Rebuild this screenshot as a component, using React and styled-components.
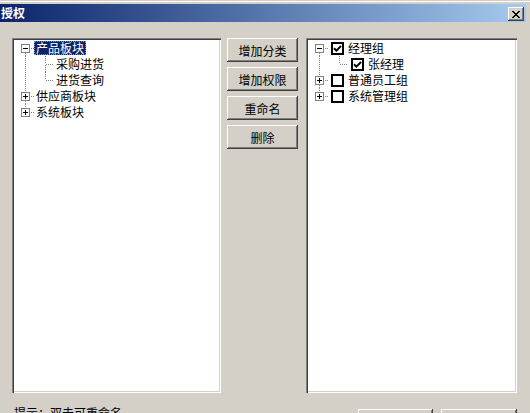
import React from "react";
import styled, { createGlobalStyle } from "styled-components";

const GlobalStyle = createGlobalStyle`
  html, body {
    margin: 0;
    padding: 0;
    background: #d4d0c8;
    overflow: hidden;
  }
  body {
    font-family: "Noto Sans CJK SC", "Liberation Sans", sans-serif;
    font-size: 12px;
    color: #000;
  }
`;

const leftTree = [
  {
    label: "产品板块",
    open: true,
    selected: true,
    children: [{ label: "采购进货" }, { label: "进货查询" }]
  },
  { label: "供应商板块", children: [{ label: "-" }] },
  { label: "系统板块", children: [{ label: "-" }] }
];

const rightTree = [
  {
    label: "经理组",
    open: true,
    checked: true,
    children: [{ label: "张经理", checked: true }]
  },
  { label: "普通员工组", children: [{ label: "-" }] },
  { label: "系统管理组", children: [{ label: "-" }] }
];

const flatten = (nodes, level = 0, guides = []) =>
  nodes.flatMap((node, i) => {
    const last = i === nodes.length - 1;
    const row = {
      ...node,
      level,
      guides,
      first: level === 0 && i === 0,
      last,
      hasChildren: !!node.children
    };
    const kids =
      node.open && node.children
        ? flatten(node.children, level + 1, [...guides, !last])
        : [];
    return [row, ...kids];
  });

const Guide = ({ on }) => (
  <svg width="20" height="16" viewBox="0 0 20 16">
    {on && (
      <line
        x1="11.5"
        y1="0"
        x2="11.5"
        y2="16"
        stroke="#808080"
        strokeDasharray="1 1"
        shapeRendering="crispEdges"
      />
    )}
  </svg>
);

const Connector = ({ top, bottom, box, open }) => (
  <svg width="20" height="16" viewBox="0 0 20 16">
    <g stroke="#808080" strokeDasharray="1 1" shapeRendering="crispEdges">
      {top && <line x1="11.5" y1="0" x2="11.5" y2={box ? 4 : 8} />}
      {bottom && <line x1="11.5" y1={box ? 13 : 9} x2="11.5" y2="16" />}
      <line x1={box ? 17 : 12} y1="8.5" x2="20" y2="8.5" />
    </g>
    {box && (
      <g shapeRendering="crispEdges">
        <rect x="7.5" y="4.5" width="8" height="8" fill="#fff" stroke="#808080" />
        <line x1="9" y1="8.5" x2="14" y2="8.5" stroke="#000" />
        {!open && <line x1="11.5" y1="6" x2="11.5" y2="11" stroke="#000" />}
      </g>
    )}
  </svg>
);

const CheckBox = ({ checked }) => (
  <Check width="13" height="13" viewBox="0 0 13 13">
    <rect x="1" y="1" width="11" height="11" fill="#fff" stroke="#000" strokeWidth="2" />
    {checked && (
      <path d="M3 6.2 L5.4 8.6 L10 4" fill="none" stroke="#000" strokeWidth="2" />
    )}
  </Check>
);

const Tree = ({ nodes, checks }) => (
  <TreeList>
    {flatten(nodes).map((row, i) => (
      <Row key={i}>
        {row.guides.map((g, j) => (
          <Guide key={j} on={g} />
        ))}
        <Connector
          top={!row.first}
          bottom={!row.last}
          box={row.hasChildren}
          open={row.open}
        />
        {checks && <CheckBox checked={row.checked} />}
        <Label $selected={row.selected}>{row.label}</Label>
      </Row>
    ))}
  </TreeList>
);

const CloseGlyph = () => (
  <svg width="8" height="7" viewBox="0 0 8 7" shapeRendering="crispEdges">
    <path
      fill="#000"
      d="M0 0h2v1H0zM6 0h2v1H6zM1 1h2v1H1zM5 1h2v1H5zM2 2h4v1H2zM3 3h2v1H3zM2 4h4v1H2zM1 5h2v1H1zM5 5h2v1H5zM0 6h2v1H0zM6 6h2v1H6z"
    />
  </svg>
);

export default function App() {
  return (
    <>
      <GlobalStyle />
      <Window>
        <TitleBar>
          <Title>授权</Title>
          <CloseButton>
            <CloseGlyph />
          </CloseButton>
        </TitleBar>
        <Body>
          <Main>
            <Panel $width={209}>
              <Tree nodes={leftTree} />
            </Panel>
            <ButtonColumn>
              <Button>增加分类</Button>
              <Button>增加权限</Button>
              <Button>重命名</Button>
              <Button>删除</Button>
            </ButtonColumn>
            <Panel $width={211}>
              <Tree nodes={rightTree} checks />
            </Panel>
          </Main>
          <Footer>
            <Hint>提示：双击可重命名</Hint>
            <FooterButtons>
              <Button $width={75}>确定</Button>
              <Button $width={76}>取消</Button>
            </FooterButtons>
          </Footer>
        </Body>
      </Window>
    </>
  );
}

const Window = styled.div`
  height: 413px;
  box-sizing: border-box;
  overflow: hidden;
  border-top: 1px solid #d4d0c8;
  box-shadow: inset 0 1px #fff;
  padding-top: 3px;
`;

const TitleBar = styled.div`
  display: flex;
  justify-content: space-between;
  align-items: flex-start;
  width: 526px;
  height: 18px;
  box-sizing: border-box;
  padding: 0 2px 0 1px;
  background: linear-gradient(to right, #0a246a, #a6caf0);
`;

const Title = styled.span`
  color: #fff;
  font-weight: bold;
  font-size: 12px;
  line-height: 18px;
`;

const CloseButton = styled.div`
  display: flex;
  align-items: center;
  justify-content: center;
  width: 16px;
  height: 14px;
  margin-top: 3px;
  background: #d4d0c8;
  box-shadow: inset -1px -1px #404040, inset 1px 1px #fff,
    inset -2px -2px #808080;
`;

const Body = styled.div`
  padding: 16px 0 0 12px;
`;

const Main = styled.div`
  display: flex;
  height: 355px;
`;

const Panel = styled.div`
  width: ${p => p.$width}px;
  height: 100%;
  box-sizing: border-box;
  padding: 2px;
  background: #fff;
  box-shadow: inset 1px 1px #808080, inset 2px 2px #404040,
    inset -1px -1px #fff, inset -2px -2px #d4d0c8;
`;

const ButtonColumn = styled.div`
  display: flex;
  flex-direction: column;
  gap: 5px;
  margin: 0 8px 0 6px;
`;

const Button = styled.button`
  width: ${p => p.$width || 71}px;
  height: 24px;
  padding: 0;
  border: none;
  background: #d4d0c8;
  font-family: "Noto Sans CJK SC", "Liberation Sans", sans-serif;
  font-size: 12px;
  color: #000;
  box-shadow: inset -1px -1px #404040, inset 1px 1px #fff,
    inset -2px -2px #808080;
  outline: none;
`;

const Footer = styled.div`
  display: flex;
  justify-content: space-between;
  align-items: flex-start;
  width: 505px;
  margin-top: 12px;
`;

const Hint = styled.span`
  padding-left: 2px;
  line-height: 16px;
`;

const FooterButtons = styled.div`
  display: flex;
  gap: 8px;
  margin-top: 4px;
`;

const TreeList = styled.div`
  display: flex;
  flex-direction: column;
`;

const Row = styled.div`
  display: flex;
  align-items: center;
  height: 16px;
  svg {
    flex: none;
  }
`;

const Check = styled.svg`
  margin: 0 2px 0 3px;
`;

const Label = styled.span`
  box-sizing: border-box;
  height: 14px;
  line-height: 14px;
  padding: 0 2px;
  white-space: nowrap;
  background: ${p => (p.$selected ? "#0a246a" : "transparent")};
  color: ${p => (p.$selected ? "#fff" : "#000")};
  outline: ${p => (p.$selected ? "1px dotted #8a94b8" : "none")};
  outline-offset: -1px;
`;
